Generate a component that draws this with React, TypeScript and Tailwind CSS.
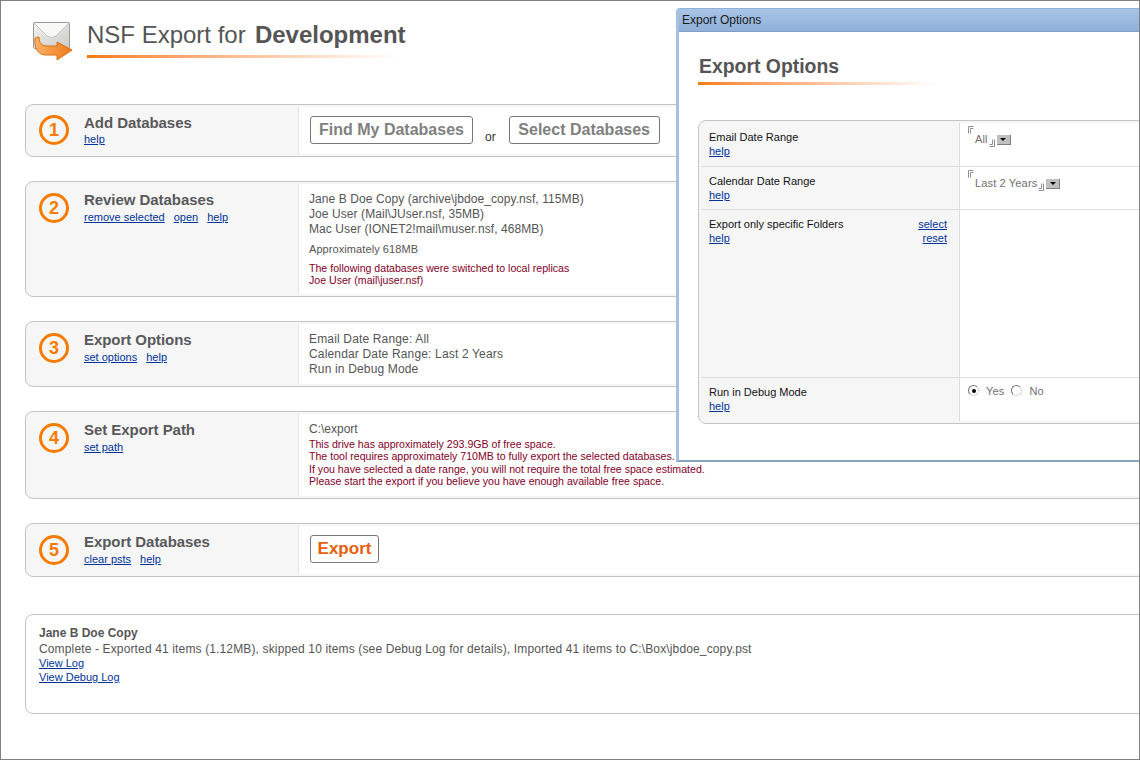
import type { ReactNode } from "react";

const FONT = "font-['Liberation_Sans',Arial,sans-serif]";

function HelpLink({ children }: { children: ReactNode }) {
  return <a className="text-[11px] leading-[14px] text-[#003399] underline">{children}</a>;
}

function EnvelopeIcon() {
  return (
    <svg width="44" height="46" viewBox="0 0 44 46" className="shrink-0">
      <defs>
        <linearGradient id="env" x1="0" y1="0" x2="1" y2="1">
          <stop offset="0" stopColor="#f4f4f2" />
          <stop offset="1" stopColor="#c9c9c5" />
        </linearGradient>
        <linearGradient id="arrow" x1="0" y1="0" x2="1" y2="0">
          <stop offset="0" stopColor="#fbb06a" />
          <stop offset="1" stopColor="#ee7a18" />
        </linearGradient>
        <radialGradient id="shade">
          <stop offset="0" stopColor="#a8a8a8" />
          <stop offset="1" stopColor="#ffffff" stopOpacity="0" />
        </radialGradient>
      </defs>
      <ellipse cx="21" cy="33" rx="22" ry="7" fill="url(#shade)" />
      <rect x="3.5" y="4.5" width="36" height="26" rx="1.5" fill="url(#env)" stroke="#9a9a98" />
      <path d="M4 5 L17 18 Q21.5 21 26 18 L39 5" fill="#f8f8f6" stroke="#c4c4c0" />
      <path d="M4 30 L15 17 M39 30 L28 17" stroke="#d8d8d4" fill="none" />
      <path
        d="M9 19 C9 25 12 28 18 28 L27 28 L27 24 L42 32 L27 42 L27 37 L16 37 C8 37 4 30 5 20 Z"
        fill="url(#arrow)"
        stroke="#e07010"
        strokeWidth="1"
      />
    </svg>
  );
}

function FieldMark({ flip }: { flip?: boolean }) {
  return (
    <svg width="6" height="8" viewBox="0 0 6 8" className={flip ? "mt-[7px] rotate-180" : "-mt-[6px]"}>
      <path d="M5.5 .5H.5V7.5M5.5 2.5H2.5V7.5" fill="none" stroke="#909090" strokeWidth="1" />
    </svg>
  );
}

function DropButton() {
  return (
    <span className="ml-[2px] mt-[3px] flex h-[10px] w-[14px] items-center justify-center border-b border-r border-b-[#808080] border-r-[#808080] bg-[#c0c0c0]">
      <span className="h-0 w-0 border-x-[3px] border-t-[3px] border-x-transparent border-t-black" />
    </span>
  );
}

function Radio({ checked }: { checked?: boolean }) {
  return (
    <span className="flex h-[11px] w-[11px] items-center justify-center rounded-full border border-b-[#d8d8d8] border-l-[#777777] border-r-[#d8d8d8] border-t-[#777777] bg-white">
      {checked && <span className="h-[4px] w-[4px] rounded-full bg-black" />}
    </span>
  );
}

function Section({
  num,
  title,
  links,
  height,
  gapAfter,
  tight,
  children,
}: {
  num: number;
  title: string;
  links: string[];
  height: string;
  gapAfter: string;
  tight?: boolean;
  children: ReactNode;
}) {
  return (
    <div className={`flex w-[1140px] shrink-0 rounded-l-[8px] border border-[#c4c4c4] bg-[#f6f6f6] p-[2px] ${height} ${gapAfter}`}>
      <div className={`flex w-[270px] shrink-0 pl-[11px] ${tight ? "pt-[8px]" : "pt-[9px]"}`}>
        <div className="flex h-[30px] w-[30px] shrink-0 items-center justify-center rounded-full border-[3px] border-[#f57c00] text-[18px] font-bold text-[#f57c00]">
          {num}
        </div>
        <div className={`ml-[15px] ${tight ? "-mt-[1px]" : "-mt-[3px]"}`}>
          <div className={`text-[15px] font-bold tracking-[-0.05px] text-[#58595b] ${tight ? "leading-[18px]" : "leading-[20px]"}`}>
            {title}
          </div>
          <div className="flex gap-[9px]">
            {links.map((l) => (
              <HelpLink key={l}>{l}</HelpLink>
            ))}
          </div>
        </div>
      </div>
      <div className="min-w-0 flex-1 border-l border-[#e4e4e4] bg-white pl-[10px]">{children}</div>
    </div>
  );
}

function OptionRow({
  label,
  height,
  last,
  right,
  children,
}: {
  label: string;
  height: string;
  last?: boolean;
  right?: ReactNode;
  children: ReactNode;
}) {
  return (
    <div className={`flex ${height} ${last ? "" : "border-b border-[#dcdcdc]"}`}>
      <div className="flex w-[258px] shrink-0 justify-between pl-[8px] pr-[12px] pt-[7px]">
        <div className="flex flex-col items-start">
          <div className="text-[11px] leading-[14px] text-[#111111]">{label}</div>
          <HelpLink>help</HelpLink>
        </div>
        {right}
      </div>
      <div className="flex-1 border-l border-[#dcdcdc] bg-white pl-[8px] pt-[5px]">{children}</div>
    </div>
  );
}

export default function App() {
  return (
    <div className={`${FONT} relative h-[760px] w-[1140px] overflow-hidden border border-[#808080] bg-white`}>
      {/* main page */}
      <div className="flex flex-col pl-[24px]">
        <div className="flex h-[103px] shrink-0 items-start pl-[5px] pt-[17px]">
          <EnvelopeIcon />
          <div className="ml-[13px] pt-[3px]">
            <div className="text-[24px] leading-[28px] text-[#555555]">
              NSF Export for <b className="ml-[2.5px] font-bold">Development</b>
            </div>
            <div className="mt-[6px] h-[3px] w-[313px] bg-gradient-to-r from-[#f57c00] to-white" />
          </div>
        </div>

        <Section num={1} title="Add Databases" links={["help"]} height="h-[53px]" gapAfter="mb-[24px]" tight>
          <div className="flex items-start pl-[1px] pt-[9px]">
            <button className="h-[28px] w-[163px] rounded-[3px] border border-[#777777] bg-white text-[16px] font-bold text-[#808080]">
              Find My Databases
            </button>
            <span className="ml-[12px] mt-[12px] text-[12px] text-[#333333]">or</span>
            <button className="ml-[13px] h-[28px] w-[151px] rounded-[3px] border border-[#777777] bg-white text-[16px] font-bold text-[#808080]">
              Select Databases
            </button>
          </div>
        </Section>

        <Section
          num={2}
          title="Review Databases"
          links={["remove selected", "open", "help"]}
          height="h-[116px]"
          gapAfter="mb-[24px]"
        >
          <div className="pt-[8px] text-[12px] leading-[15px] tracking-[0.08px] text-[#555555]">
            <div>Jane B Doe Copy (archive\jbdoe_copy.nsf, 115MB)</div>
            <div>Joe User (Mail\JUser.nsf, 35MB)</div>
            <div>Mac User (IONET2!mail\muser.nsf, 468MB)</div>
            <div className="mt-[5px] text-[11px] leading-[14px]">Approximately 618MB</div>
            <div className="mt-[6px] text-[10.6px] leading-[12px] tracking-normal text-[#850027]">
              <div>The following databases were switched to local replicas</div>
              <div>Joe User (mail\juser.nsf)</div>
            </div>
          </div>
        </Section>

        <Section num={3} title="Export Options" links={["set options", "help"]} height="h-[66px]" gapAfter="mb-[24px]">
          <div className="pt-[8px] text-[12px] leading-[15px] tracking-[0.16px] text-[#555555]">
            <div>Email Date Range: All</div>
            <div>Calendar Date Range: Last 2 Years</div>
            <div>Run in Debug Mode</div>
          </div>
        </Section>

        <Section num={4} title="Set Export Path" links={["set path"]} height="h-[88px]" gapAfter="mb-[24px]">
          <div className="pt-[8px]">
            <div className="text-[12px] leading-[15px] text-[#555555]">C:\export</div>
            <div className="pt-[1px] text-[10.6px] leading-[12.4px] text-[#850027]">
              <div>This drive has approximately 293.9GB of free space.</div>
              <div>The tool requires approximately 710MB to fully export the selected databases.</div>
              <div>If you have selected a date range, you will not require the total free space estimated.</div>
              <div>Please start the export if you believe you have enough available free space.</div>
            </div>
          </div>
        </Section>

        <Section num={5} title="Export Databases" links={["clear psts", "help"]} height="h-[54px]" gapAfter="mb-[37px]">
          <div className="pl-[1px] pt-[9px]">
            <button className="h-[28px] w-[69px] rounded-[3px] border border-[#777777] bg-white text-[17px] font-bold text-[#e8600c]">
              Export
            </button>
          </div>
        </Section>

        <div className="h-[100px] w-[1140px] shrink-0 rounded-l-[8px] border border-[#c4c4c4] pl-[13px] pt-[11px]">
          <div className="text-[12px] font-bold leading-[15px] text-[#555555]">Jane B Doe Copy</div>
          <div className="text-[12px] leading-[16px] tracking-[0.14px] text-[#555555]">
            Complete - Exported 41 items (1.12MB), skipped 10 items (see Debug Log for details), Imported 41 items to C:\Box\jbdoe_copy.pst
          </div>
          <div className="-mt-[1px] flex flex-col items-start">
            <HelpLink>View Log</HelpLink>
            <HelpLink>View Debug Log</HelpLink>
          </div>
        </div>
      </div>

      {/* Export Options dialog */}
      <div className="absolute left-[675px] top-[7px] h-[454px] w-[520px] rounded-tl-[4px] border-b-2 border-l-[3px] border-t border-b-[#8aa3bf] border-l-[#a6c0e2] border-t-[#8fb0d8] bg-white">
        <div className="flex h-[23px] items-center border-b border-[#7f9dc6] bg-gradient-to-b from-[#a9c5e8] to-[#8fb1d8] pl-[3px] text-[12px] text-[#1a1a1a]">
          Export Options
        </div>
        <div className="pl-[19px] pr-0 pt-[22px]">
          <div className="pl-[1px] text-[19.4px] font-bold leading-[24px] text-[#555555]">Export Options</div>
          <div className="mt-[4px] h-[3px] w-[238px] bg-gradient-to-r from-[#f57c00] to-white" />
          <div className="mt-[35px] w-[520px] rounded-l-[8px] border border-[#c4c4c4] bg-[#f6f6f6] p-[2px]">
            <OptionRow label="Email Date Range" height="h-[44px]">
              <div className="flex items-start pt-[4px] text-[11px] leading-[14px] tracking-[0.15px] text-[#707070]">
                <FieldMark />
                <span className="mx-[1px]">All</span>
                <FieldMark flip />
                <DropButton />
              </div>
            </OptionRow>
            <OptionRow label="Calendar Date Range" height="h-[43px]">
              <div className="flex items-start pt-[4px] text-[11px] leading-[14px] tracking-[0.15px] text-[#707070]">
                <FieldMark />
                <span className="mx-[1px]">Last 2 Years</span>
                <FieldMark flip />
                <DropButton />
              </div>
            </OptionRow>
            <OptionRow
              label="Export only specific Folders"
              height="h-[168px]"
              right={
                <div className="flex flex-col items-end">
                  <HelpLink>select</HelpLink>
                  <HelpLink>reset</HelpLink>
                </div>
              }
            >
              <span />
            </OptionRow>
            <OptionRow label="Run in Debug Mode" height="h-[43px]" last>
              <div className="flex items-center text-[11px] leading-[14px] tracking-[0.15px] text-[#707070]">
                <Radio checked />
                <span className="ml-[7px] mt-[1px]">Yes</span>
                <span className="ml-[7px]">
                  <Radio />
                </span>
                <span className="ml-[7px] mt-[1px]">No</span>
              </div>
            </OptionRow>
          </div>
        </div>
      </div>
    </div>
  );
}
